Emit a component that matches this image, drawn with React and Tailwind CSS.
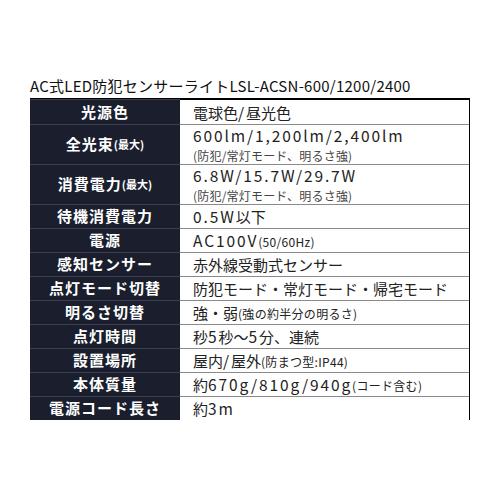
import React from "react";

const rows = [
  { label: "光源色", value: "電球色/昼光色" },
  { label: "全光束", labelSmall: "(最大)", value: "600lm/1,200lm/2,400lm", note: "(防犯/常灯モード、明るさ強)" },
  { label: "消費電力", labelSmall: "(最大)", value: "6.8W/15.7W/29.7W", note: "(防犯/常灯モード、明るさ強)" },
  { label: "待機消費電力", value: "0.5W以下" },
  { label: "電源", value: "AC100V", small: "(50/60Hz)" },
  { label: "感知センサー", value: "赤外線受動式センサー" },
  { label: "点灯モード切替", value: "防犯モード・常灯モード・帰宅モード" },
  { label: "明るさ切替", value: "強・弱", small: "(強の約半分の明るさ)" },
  { label: "点灯時間", value: "秒5秒〜5分、連続" },
  { label: "設置場所", value: "屋内/屋外", small: "(防まつ型:IP44)" },
  { label: "本体質量", value: "約670g/810g/940g", small: "(コード含む)" },
  { label: "電源コード長さ", value: "約3m" },
];

// latin runs get a little extra spacing so they read as wide as the original's geometric face
const Value = ({ text }) =>
  text.split(/([A-Za-z0-9.,/]+)/).map((part, i) =>
    /^[A-Za-z0-9.,/]+$/.test(part) ? (
      <span key={i} className="text-[15.5px] tracking-[1.9px]">
        {part}
      </span>
    ) : (
      <span key={i} className="text-[15px]">
        {part}
      </span>
    )
  );

const App = () => {
  return (
    <div
      className="w-[500px] h-[500px] bg-white pt-[74px] pl-[30px]"
      style={{ fontFamily: '"Noto Sans CJK JP", "Noto Sans", sans-serif' }}
    >
      <div className="w-[440px]">
        <h1 className="text-[15px] leading-[24px] text-[#111] tracking-[0.25px] whitespace-nowrap">
          AC式LED防犯センサーライトLSL-ACSN-600/1200/2400
        </h1>
        <div className="border-t-[2px] border-black border-r border-r-black">
          {rows.map((row, i) => {
            const tall = !!row.note;
            return (
              <div
                key={i}
                className={`grid grid-cols-[150px_1fr] ${tall ? "h-[40px]" : "h-[24px]"} ${
                  i > 0 ? "border-t border-t-[#8a8a8a]" : ""
                }`}
              >
                <div className="bg-[#1b1f2d] flex items-center justify-center text-white font-bold text-[15px] tracking-[1px] border-t border-t-[#3a3f52] -mt-px">
                  <span>{row.label}</span>
                  {row.labelSmall && <span className="text-[11px] tracking-normal">{row.labelSmall}</span>}
                </div>
                <div className="flex flex-col justify-center pl-[13px] text-[#222]">
                  <div className="leading-[20px] whitespace-nowrap">
                    <Value text={row.value} />
                    {row.small && <span className="text-[12px] tracking-[0.3px]">{row.small}</span>}
                  </div>
                  {row.note && (
                    <div className="mt-[2px] text-[12px] leading-[16px] text-[#444] tracking-[0.2px]">{row.note}</div>
                  )}
                </div>
              </div>
            );
          })}
        </div>
      </div>
    </div>
  );
};

export default App;
